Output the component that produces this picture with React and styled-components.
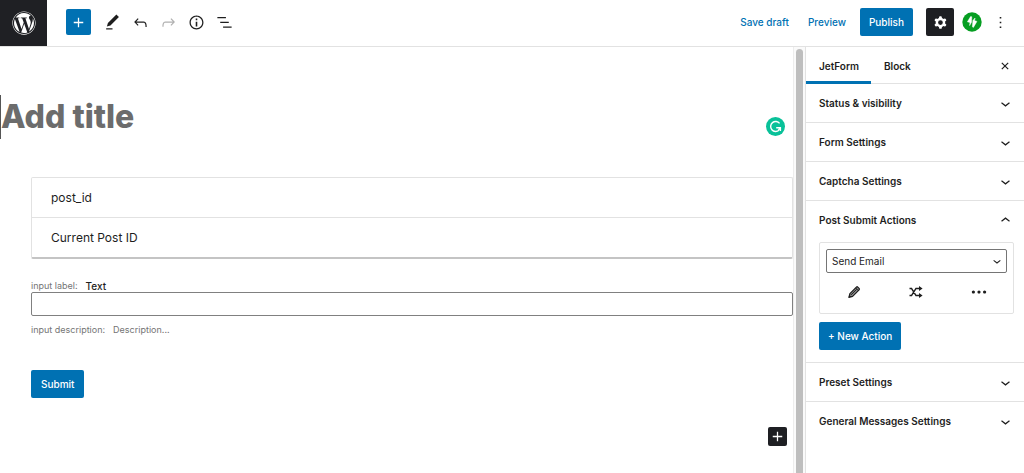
import React from "react";
import styled, { createGlobalStyle, css } from "styled-components";
import { FaWordpress } from "react-icons/fa";

const blue = "#0071b3";
const ink = "#1e1e1e";
const line = "#e2e2e2";

const GlobalStyle = createGlobalStyle`
  *, *::before, *::after { box-sizing: border-box; }
  body {
    margin: 0;
    background: #fff;
    color: ${ink};
    font-family: Inter, "Liberation Sans", sans-serif;
    font-size: 11px;
    line-height: 16px;
  }
  button, input, select { font: inherit; color: inherit; margin: 0; }
  button { border: 0; background: none; padding: 0; cursor: pointer; }
  h2 { margin: 0; font: inherit; }
`;

const Page = styled.div`
  display: flex;
  flex-direction: column;
  min-height: 100vh;
`;

const Header = styled.header`
  display: flex;
  align-items: center;
  border-bottom: 1px solid ${line};
`;

const HeaderGroup = styled.div`
  display: flex;
  align-items: center;
  padding-bottom: 2px;
`;

const Logo = styled.a`
  display: flex;
  align-items: center;
  justify-content: center;
  width: 47px;
  height: 46px;
  margin-right: 19px;
  background: #1f2024;
  color: #fff;
`;

const IconButton = styled.button`
  display: flex;
  align-items: center;
  justify-content: center;
  width: 28px;
  height: 28px;
  border-radius: 2px;
  color: ${(p) => (p.$muted ? "#b0b0b0" : ink)};
  ${(p) => p.$dark && css`background: #1e1f23; color: #fff;`}
`;

const InserterButton = styled(IconButton)`
  width: 25px;
  height: 26px;
  margin-right: 7px;
  background: ${blue};
  color: #fff;
`;

const SmallInserter = styled(IconButton)`
  width: 19px;
  height: 19px;
  background: #1e1f23;
  color: #fff;
`;

const TextButton = styled.button`
  margin-right: 19px;
  color: ${blue};
  font-weight: 500;
  font-size: 10px;
`;

const PrimaryButton = styled.button`
  height: 28px;
  padding: 0 ${(p) => (p.$wide ? 10 : 9)}px;
  border-radius: 2px;
  background: ${blue};
  color: #fff;
  font-size: 10px;
  font-weight: 500;
`;

const HeaderActions = styled(HeaderGroup)`
  margin-left: auto;
  padding-right: 10px;
  ${PrimaryButton} { margin: 0 13px 0 -5px; }
`;

const Badge = styled.button`
  display: flex;
  margin: 0 4px 0 8px;
`;

const Body = styled.div`
  display: flex;
  flex: 1;
`;

const Canvas = styled.main`
  flex: 1;
  min-width: 0;
  border-right: 1px solid #ededed;
`;

const TitleRow = styled.div`
  display: flex;
  align-items: center;
  padding: 48px 8px 0 0;
`;

const TitleInput = styled.input`
  flex: 1;
  min-width: 0;
  height: 44px;
  padding: 0 0 2px;
  border: 0;
  border-left: 1px solid #555;
  outline: 0;
  background: none;
  font-size: 32px;
  font-weight: 800;
  &::placeholder { color: #6c6c6c; opacity: 1; }
`;

const TitleBadge = styled.button`
  display: flex;
  padding-top: 18px;
`;

const Blocks = styled.div`
  padding: 38px 0 0 31px;
`;

const HiddenField = styled.div`
  border: 1px solid ${line};
  border-bottom: 2px solid #c4c4c4;
  border-radius: 2px;
  font-size: 12px;
`;

const HiddenFieldRow = styled.div`
  padding: 12px 19px 11px;
  & + & { border-top: 1px solid ${line}; }
`;

const FieldMeta = styled.div`
  display: flex;
  align-items: center;
  gap: 8px;
  color: #757575;
  font-size: 9px;
`;

const FieldName = styled.label`
  color: ${ink};
  font-size: 10px;
  font-weight: 500;
`;

const FieldBlock = styled.div`
  padding-top: 19px;
`;

const TextField = styled.input`
  display: block;
  width: 100%;
  height: 24px;
  margin: -2px 0 6px;
  padding: 0 6px;
  border: 1px solid #808080;
  border-radius: 2px;
  background: #fff;
`;

const SubmitRow = styled.div`
  padding-top: 32px;
`;

const AppenderRow = styled.div`
  display: flex;
  justify-content: flex-end;
  padding: 29px 6px 0 0;
`;

const ScrollTrack = styled.div`
  display: flex;
  width: 11px;
  padding: 2px 2px 0;
  background: #fafafa;
`;

const ScrollThumb = styled.div`
  width: 7px;
  border-radius: 4px 4px 0 0;
  background: #bebebe;
`;

const Sidebar = styled.aside`
  width: 219px;
  border-left: 1px solid ${line};
`;

const Tabs = styled.div`
  display: flex;
  align-items: stretch;
  height: 37px;
  padding-right: 5px;
  box-shadow: inset 0 -1px ${line};
`;

const Tab = styled.button`
  padding: 0 12px 0 13px;
  font-weight: 600;
  font-size: 10px;
  ${(p) => p.$active && css`box-shadow: inset 0 -3px ${blue};`}
`;

const CloseButton = styled(IconButton)`
  height: auto;
  margin-left: auto;
`;

const Panel = styled.section`
  border-bottom: ${(p) => (p.$last ? "0" : `1px solid ${line}`)};
`;

const PanelToggle = styled.button`
  display: flex;
  align-items: center;
  justify-content: space-between;
  width: 100%;
  height: 38px;
  padding: 0 9px 0 13px;
  font-size: 10px;
  font-weight: 600;
`;

const PanelBody = styled.div`
  padding: 3px 10px 12px 13px;
`;

const ActionCard = styled.div`
  margin-bottom: 8px;
  padding: 6px 3px 5px;
  border: 1px solid ${line};
  border-radius: 2px;
`;

const SelectWrap = styled.div`
  display: grid;
  align-items: center;
  margin: 0 3px;
  > * { grid-area: 1 / 1; }
  > svg { justify-self: end; margin-right: 2px; pointer-events: none; }
`;

const ActionSelect = styled.select`
  width: 100%;
  height: 24px;
  padding: 0 24px 0 5px;
  appearance: none;
  border: 1px solid #757575;
  border-radius: 2px;
  background: #fff;
  font-size: 10px;
`;

const ActionTools = styled.div`
  display: grid;
  grid-template-columns: repeat(3, 1fr);
  justify-items: center;
  padding: 5px 0 2px;
`;

const paths = {
  plus: "M18 11.2h-5.2V6h-1.6v5.2H6v1.6h5.2V18h1.6v-5.2H18z",
  edit: "M20.1 5.1L16.9 2 6.2 12.7l-1.3 4.4 4.5-1.3L20.1 5.1zM4 20.8h8v-1.5H4v1.5z",
  undo: "M18.3 11.7c-.6-.6-1.4-.9-2.3-.9H6.7l2.9-3.3-1.1-1-4.5 5L8.5 16l1-1-2.7-2.7H16c.5 0 .9.2 1.3.5 1 1 1 3.4 1 4.5v.3h1.5v-.2c0-1.5 0-4.3-1.5-5.7z",
  redo: "M15.6 6.5l-1.1 1 2.9 3.3H8c-.9 0-1.7.3-2.3.9-1.4 1.5-1.4 4.2-1.4 5.6v.2h1.5v-.3c0-1.1 0-3.5 1-4.5.3-.3.7-.5 1.3-.5h9.2L14.5 15l1.1 1.1 4.6-4.6-4.6-5z",
  info: "M12 3.2c-4.8 0-8.8 3.9-8.8 8.8 0 4.8 3.9 8.8 8.8 8.8 4.8 0 8.8-3.9 8.8-8.8 0-4.8-4-8.8-8.8-8.8zm0 16c-4 0-7.2-3.3-7.2-7.2C4.8 8 8 4.8 12 4.8s7.2 3.3 7.2 7.2c0 4-3.2 7.2-7.2 7.2zM11 17h2v-6h-2v6zm0-8h2V7h-2v2z",
  list: "M13.8 5.2H3v1.5h10.8V5.2zm-3.6 12v1.5H21v-1.5H10.2zm7.2-6H6.6v1.5h10.8v-1.5z",
  cog: "M10.289 4.836A1 1 0 0111.275 4h1.306a1 1 0 01.987.836l.244 1.466c.787.26 1.503.679 2.108 1.218l1.393-.522a1 1 0 011.216.437l.653 1.13a1 1 0 01-.23 1.273l-1.148.944a6.025 6.025 0 010 2.435l1.149.946a1 1 0 01.23 1.272l-.653 1.13a1 1 0 01-1.216.437l-1.394-.522c-.605.54-1.32.958-2.108 1.218l-.244 1.466a1 1 0 01-.987.836h-1.306a1 1 0 01-.986-.836l-.244-1.466a5.995 5.995 0 01-2.108-1.218l-1.394.522a1 1 0 01-1.217-.436l-.653-1.131a1 1 0 01.23-1.272l1.149-.946a6.026 6.026 0 010-2.435l-1.148-.944a1 1 0 01-.23-1.272l.653-1.131a1 1 0 011.217-.437l1.393.522a5.994 5.994 0 012.108-1.218l.244-1.466zM14.929 12a3 3 0 11-6 0 3 3 0 016 0z",
  more: "M13 19h-2v-2h2v2zm0-6h-2v-2h2v2zm0-6h-2V5h2v2z",
  down: "M17.5 11.6L12 16l-5.5-4.4.9-1.2L12 14l4.5-3.6 1 1.2z",
  up: "M6.5 12.4L12 8l5.5 4.4-.9 1.2L12 10l-4.5 3.6-1-1.2z",
};

const Icon = ({ name, size = 19 }) => (
  <svg width={size} height={size} viewBox="0 0 24 24" fill="currentColor" fillRule="evenodd" aria-hidden="true">
    <path d={paths[name]} />
  </svg>
);

const PencilIcon = () => (
  <svg width="16" height="16" viewBox="0 0 16 16" aria-hidden="true">
    <path d="M10.4 3.1a1 1 0 0 1 1.4 0l1.3 1.3a1 1 0 0 1 0 1.4L6.6 12.3l-3.7 1 1-3.7z" fill="#8a8a8a" stroke="currentColor" strokeWidth="1.2" strokeLinejoin="round" />
    <path d="M5 10.9l5.6-5.6M9.6 3.9l2.7 2.7" fill="none" stroke="currentColor" strokeWidth="1" />
    <path d="M2.6 13.6l.8-2.6 1.8 1.8z" fill="currentColor" />
  </svg>
);

const ShuffleIcon = () => (
  <svg width="16" height="16" viewBox="0 0 16 16" aria-hidden="true">
    <path d="M1.5 4.4h2L8 11.6h3.6M1.5 11.6h2L8 4.4h3.6" fill="none" stroke="currentColor" strokeWidth="1.5" />
    <path d="M11 1.9l3.6 2.5L11 6.9zM11 9.1l3.6 2.5-3.6 2.5z" fill="currentColor" />
  </svg>
);

const DotsIcon = () => (
  <svg width="16" height="16" viewBox="0 0 20 20" fill="currentColor" aria-hidden="true">
    <path d="M5 10c0-1.1-.9-2-2-2s-2 .9-2 2 .9 2 2 2 2-.9 2-2zm12-2c-1.1 0-2 .9-2 2s.9 2 2 2 2-.9 2-2-.9-2-2-2zm-7 0c-1.1 0-2 .9-2 2s.9 2 2 2 2-.9 2-2-.9-2-2-2z" />
  </svg>
);

const CloseIcon = () => (
  <svg width="8" height="8" viewBox="0 0 8 8" fill="none" stroke="currentColor" strokeWidth="1.2" aria-hidden="true">
    <path d="M.8 .8l6.4 6.4M7.2 .8L.8 7.2" />
  </svg>
);

const JetpackIcon = () => (
  <svg width="20" height="20" viewBox="0 0 20 20" aria-hidden="true">
    <circle cx="10" cy="10" r="9.7" fill="#069e22" />
    <path d="M8.6 4.6L5.4 9.8l2.6.8-.4 3 1.9-3.4.3-5.4zM11.4 15.4l3.5-6-2.4-.8.6-2.6-2.2 2.4-.5 6.4z" fill="#fff" stroke="#fff" strokeWidth=".5" strokeLinejoin="round" />
  </svg>
);

const GrammarIcon = () => (
  <svg width="19" height="19" viewBox="0 0 19 19" aria-hidden="true">
    <circle cx="9.5" cy="9.5" r="9.5" fill="#09c199" />
    <path d="M13.6 6.4A5 5 0 1 0 13 13.2M10.2 10.7h4.2v3.4M14.2 10.9l-2 2.5" fill="none" stroke="#fff" strokeWidth="1.4" />
  </svg>
);

const SettingsPanel = ({ title, open, last, children }) => (
  <Panel $last={last}>
    <h2>
      <PanelToggle type="button" aria-expanded={!!open}>
        {title}
        <Icon name={open ? "up" : "down"} />
      </PanelToggle>
    </h2>
    {open && <PanelBody>{children}</PanelBody>}
  </Panel>
);

export default function App() {
  return (
    <Page>
      <GlobalStyle />
      <Header>
        <Logo href="#" aria-label="View posts"><FaWordpress size={24} /></Logo>
        <HeaderGroup>
          <InserterButton type="button" aria-label="Add block"><Icon name="plus" /></InserterButton>
          <IconButton type="button" aria-label="Tools"><Icon name="edit" /></IconButton>
          <IconButton type="button" aria-label="Undo"><Icon name="undo" /></IconButton>
          <IconButton type="button" aria-label="Redo" $muted><Icon name="redo" /></IconButton>
          <IconButton type="button" aria-label="Details"><Icon name="info" /></IconButton>
          <IconButton type="button" aria-label="List view"><Icon name="list" /></IconButton>
        </HeaderGroup>
        <HeaderActions>
          <TextButton type="button">Save draft</TextButton>
          <TextButton type="button">Preview</TextButton>
          <PrimaryButton type="button">Publish</PrimaryButton>
          <IconButton type="button" aria-label="Settings" $dark><Icon name="cog" /></IconButton>
          <Badge type="button" aria-label="Jetpack"><JetpackIcon /></Badge>
          <IconButton type="button" aria-label="Options"><Icon name="more" /></IconButton>
        </HeaderActions>
      </Header>
      <Body>
        <Canvas>
          <TitleRow>
            <TitleInput type="text" placeholder="Add title" aria-label="Add title" />
            <TitleBadge type="button" aria-label="Check writing"><GrammarIcon /></TitleBadge>
          </TitleRow>
          <Blocks>
            <HiddenField>
              <HiddenFieldRow>post_id</HiddenFieldRow>
              <HiddenFieldRow>Current Post ID</HiddenFieldRow>
            </HiddenField>
            <FieldBlock>
              <FieldMeta>
                <span>input label:</span>
                <FieldName htmlFor="text-field">Text</FieldName>
              </FieldMeta>
              <TextField id="text-field" type="text" />
              <FieldMeta>
                <span>input description:</span>
                <span>Description...</span>
              </FieldMeta>
            </FieldBlock>
            <SubmitRow>
              <PrimaryButton type="button" $wide>Submit</PrimaryButton>
            </SubmitRow>
            <AppenderRow>
              <SmallInserter type="button" aria-label="Add block"><Icon name="plus" /></SmallInserter>
            </AppenderRow>
          </Blocks>
        </Canvas>
        <ScrollTrack><ScrollThumb /></ScrollTrack>
        <Sidebar>
          <Tabs>
            <Tab type="button" $active>JetForm</Tab>
            <Tab type="button">Block</Tab>
            <CloseButton type="button" aria-label="Close settings"><CloseIcon /></CloseButton>
          </Tabs>
          <SettingsPanel title="Status &amp; visibility" />
          <SettingsPanel title="Form Settings" />
          <SettingsPanel title="Captcha Settings" />
          <SettingsPanel title="Post Submit Actions" open>
            <ActionCard>
              <SelectWrap>
                <ActionSelect aria-label="Action" defaultValue="email">
                  <option value="email">Send Email</option>
                </ActionSelect>
                <Icon name="down" size={16} />
              </SelectWrap>
              <ActionTools>
                <IconButton type="button" aria-label="Edit action"><PencilIcon /></IconButton>
                <IconButton type="button" aria-label="Conditions"><ShuffleIcon /></IconButton>
                <IconButton type="button" aria-label="More"><DotsIcon /></IconButton>
              </ActionTools>
            </ActionCard>
            <PrimaryButton type="button">+ New Action</PrimaryButton>
          </SettingsPanel>
          <SettingsPanel title="Preset Settings" />
          <SettingsPanel title="General Messages Settings" last />
        </Sidebar>
      </Body>
    </Page>
  );
}
